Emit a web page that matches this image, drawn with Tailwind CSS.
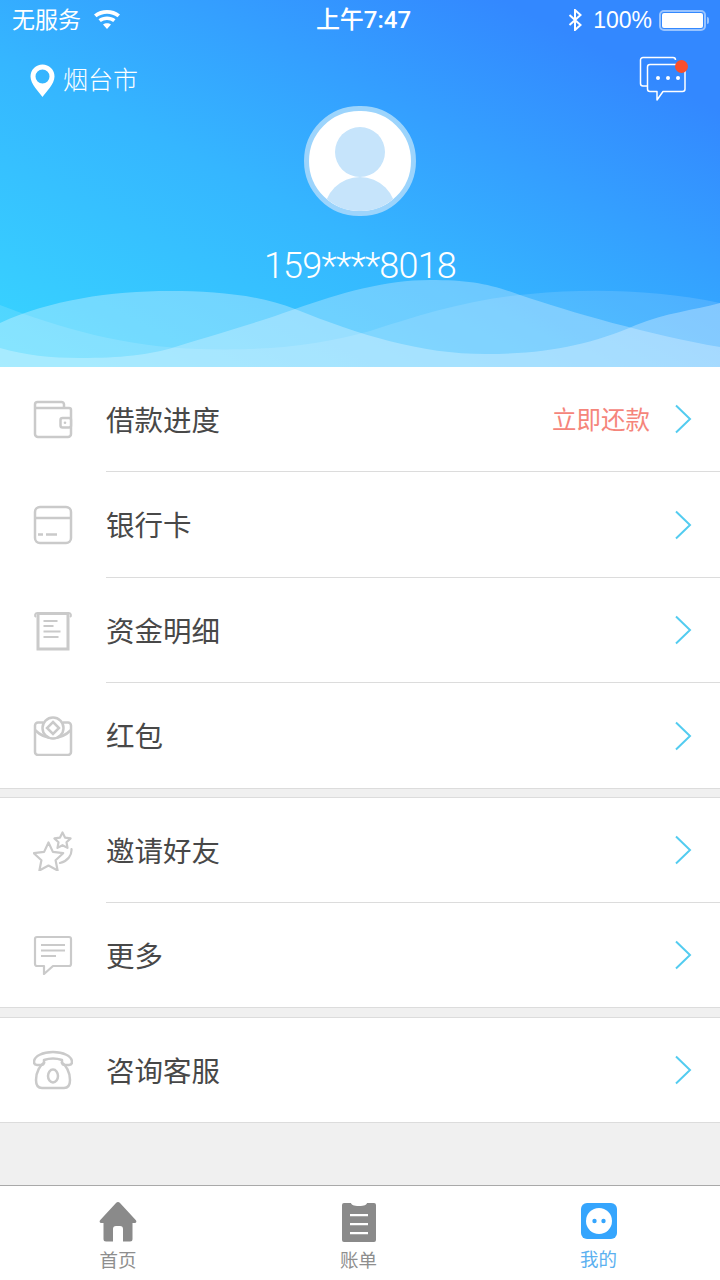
<!DOCTYPE html>
<html lang="zh">
<head>
    <meta charset="UTF-8">
    <meta name="viewport" content="width=device-width, initial-scale=1.0">
    <title>我的</title>
    <script src="https://cdn.jsdelivr.net/npm/@tailwindcss/browser@4"></script>
</head>
<body class="bg-[#f0f0f0] font-['Liberation_Sans','Noto_Sans_CJK_SC',sans-serif]">
<div class="w-[720px] h-[1280px] flex flex-col overflow-hidden">

    <!-- 头部 -->
    <header class="relative h-[367px] shrink-0 bg-[linear-gradient(to_top_right,#38d6ff_0%,#35b6ff_42%,#3388ff_85%)] text-white">
        <svg class="absolute left-0 top-0" width="720" height="367" viewBox="0 0 720 367">
            <path d="M0 323C50 300 110 291 170 291C215 291 260 295 295 309C360 335 420 354 486 354C545 354 590 345 636 325C665 313 695 310 720 303V367H0Z" fill="#fff" fill-opacity=".3"/>
            <path d="M0 305C60 328 125 347 200 349C270 351 320 345 370 331C420 315 470 299 530 294C590 288 660 290 720 303V367H0Z" fill="#fff" fill-opacity=".13"/>
            <path d="M0 348C25 355 50 358 80 358C120 358 150 355 175 347C220 333 250 325 295 309C340 293 385 280 430 280C470 280 490 284 520 295C570 312 650 335 720 347V367H0Z" fill="#fff" fill-opacity=".28"/>
        </svg>

        <div class="relative h-10 flex items-center justify-between pl-3 pr-[11px] text-[23px] leading-none">
            <div class="flex items-center gap-[12px] w-[200px]">
                <span>无服务</span>
                <svg width="28" height="20" viewBox="0 0 28 20" fill="#fff"><path d="M14 19l-4-4.600c2.200-1.700 5.800-1.700 8 0zM7.800 12l-2.300-2.700c4.800-3.800 12.200-3.800 17 0L20.200 12c-3.500-2.700-8.900-2.700-12.400 0zM3.500 7.200L1 4.400c7.200-5.800 18.800-5.800 26 0l-2.500 2.800C18.500 2.500 9.500 2.500 3.500 7.200z"/></svg>
            </div>
            <span class="font-['Roboto','Noto_Sans_CJK_SC',sans-serif] font-medium text-[24px] ml-[6px]">上午7:47</span>
            <div class="flex items-center justify-end w-[200px]">
                <svg class="mr-[10px]" width="15" height="22" viewBox="0 0 15 22" fill="none" stroke="#fff" stroke-width="2"><path d="M1.500 6l11 10-5.500 5V1l5.500 5-11 10"/></svg>
                <span class="mr-[7px]">100%</span>
                <div class="w-[47px] h-[21px] rounded-[5px] border-2 border-white/50 p-[1px]"><div class="w-full h-full bg-white rounded-[2px]"></div></div>
                <div class="w-[2px] h-[7px] bg-white/50 ml-[1px] rounded-r-sm"></div>
            </div>
        </div>

        <div class="relative flex items-start justify-between pl-[30px] pr-[33px] pt-[17px]">
            <div class="flex items-center gap-[8px] h-[46px]">
                <svg width="25" height="33" viewBox="0 0 25 33"><path fill-rule="evenodd" d="M12.500 33C9 28 .5 20 .5 12.500a12 12 0 0 1 24 0C24.500 20 16 28 12.500 33zM12.500 19.500a7 7 0 1 0 0-14 7 7 0 0 0 0 14z" fill="#fff"/></svg>
                <span class="text-[25px] leading-none font-light">烟台市</span>
            </div>
            <svg class="-mt-[1px]" width="48" height="46" viewBox="0 0 48 46" fill="none" stroke="#fff" stroke-width="1.500" stroke-linejoin="round">
                <path d="M8 30H4a2.500 2.500 0 0 1-2.500-2.500V4A2.500 2.500 0 0 1 4 1.500h30a2.500 2.500 0 0 1 2.500 2.500"/>
                <path d="M11 8.500h33a2.500 2.500 0 0 1 2 2.500v22a2.500 2.500 0 0 1-2.500 2.500H24l-6 8.500v-8.500h-7A2.500 2.500 0 0 1 8.500 33V11A2.500 2.500 0 0 1 11 8.500z"/>
                <circle cx="19" cy="22" r="2" fill="#fff" stroke="none"/><circle cx="29" cy="22" r="2" fill="#fff" stroke="none"/><circle cx="39" cy="22" r="2" fill="#fff" stroke="none"/>
            </svg>
            <div class="absolute right-[32px] top-[20px] w-[13px] h-[13px] rounded-full bg-[#fa4f2c]"></div>
        </div>

        <div class="absolute left-[304px] top-[106px] w-[112px] h-[110px] rounded-full bg-white border-[5px] border-[#9cd4fc] overflow-hidden">
            <div class="absolute left-[26px] top-[16px] w-[50px] h-[50px] rounded-full bg-[#c6e4fb]"></div>
            <div class="absolute left-[15px] top-[66px] w-[72px] h-[72px] rounded-full bg-[#c6e4fb]"></div>
        </div>

        <div class="absolute left-0 right-0 top-[246px] text-center font-['Roboto',sans-serif] text-[36px] leading-10 font-light tracking-[-0.8px]">159****8018</div>
    </header>

    <!-- 菜单 -->
    <section class="bg-white border-b border-[#dcdcdc]">
        <a class="h-[105px] flex items-center">
            <div class="w-[106px] pl-[33px] shrink-0">
                <svg width="40" height="40" viewBox="0 0 40 40" fill="none" stroke="#cacaca" stroke-width="2.500"><path d="M2 8V34a3 3 0 0 0 3 3h30a3 3 0 0 0 3-3V10a2 2 0 0 0-2-2H2zM2 8V4.500a2.500 2.500 0 0 1 2.500-2.500h24a2.500 2.500 0 0 1 2.500 2.500V8"/><rect x="27.500" y="18" width="10.500" height="9.500" rx="2" fill="#fff"/><circle cx="32" cy="22.700" r="1.300" fill="#cacaca" stroke="none"/></svg>
            </div>
            <div class="flex-1 h-full flex items-center border-b border-[#dcdcdc] text-[28.500px] text-[#484848]">
                <span class="flex-1 pt-[4px]">借款进度</span>
                <span class="text-[24.500px] text-[#f5857b] mr-[24px] pt-[4px]">立即还款</span>
                <svg class="mr-[27px]" width="19" height="30" viewBox="0 0 19 30" fill="none" stroke="#53ccf0" stroke-width="2"><path d="M2 1.500L16 15 2 28.500"/></svg>
            </div>
        </a>
        <a class="h-[106px] flex items-center">
            <div class="w-[106px] pl-[33px] shrink-0">
                <svg width="40" height="40" viewBox="0 0 40 40" fill="none" stroke="#cacaca" stroke-width="2.500"><rect x="2" y="2" width="36" height="36" rx="5"/><path d="M2 13h36"/><path d="M5 29.500h5M13 29.500h11"/></svg>
            </div>
            <div class="flex-1 h-full flex items-center border-b border-[#dcdcdc] text-[28.500px] text-[#484848]">
                <span class="flex-1 pt-[4px]">银行卡</span>
                <svg class="mr-[27px]" width="19" height="30" viewBox="0 0 19 30" fill="none" stroke="#53ccf0" stroke-width="2"><path d="M2 1.500L16 15 2 28.500"/></svg>
            </div>
        </a>
        <a class="h-[105px] flex items-center">
            <div class="w-[106px] pl-[33px] shrink-0">
                <svg width="40" height="40" viewBox="0 0 40 40" fill="none" stroke="#cacaca" stroke-width="2.500"><path d="M4 2.500h32" stroke-width="3"/><path d="M3 6a2.200 2.200 0 0 1 1-4M37 6a2.200 2.200 0 0 0-1-4" stroke-width="2"/><path d="M5 3v35h30V3" stroke-width="3"/><path d="M10.500 10h14M10.500 15h10M10.500 20.500h17M10.500 26h15" stroke-width="2"/></svg>
            </div>
            <div class="flex-1 h-full flex items-center border-b border-[#dcdcdc] text-[28.500px] text-[#484848]">
                <span class="flex-1 pt-[4px]">资金明细</span>
                <svg class="mr-[27px]" width="19" height="30" viewBox="0 0 19 30" fill="none" stroke="#53ccf0" stroke-width="2"><path d="M2 1.500L16 15 2 28.500"/></svg>
            </div>
        </a>
        <a class="h-[105px] flex items-center">
            <div class="w-[106px] pl-[33px] shrink-0">
                <svg width="40" height="40" viewBox="0 0 40 40" fill="none" stroke="#cacaca" stroke-width="2.500"><path d="M10 6.500H5a3 3 0 0 0-3 3V36a3 3 0 0 0 3 3h30a3 3 0 0 0 3-3V9.500a3 3 0 0 0-3-3h-5"/><path d="M2 14c5 5 10 8 18 8s13-3 18-8"/><circle cx="20" cy="12" r="10.500" fill="#fff"/><path d="M20 6l6 6-6 6-6-6z"/></svg>
            </div>
            <div class="flex-1 h-full flex items-center text-[28.500px] text-[#484848]">
                <span class="flex-1 pt-[4px]">红包</span>
                <svg class="mr-[27px]" width="19" height="30" viewBox="0 0 19 30" fill="none" stroke="#53ccf0" stroke-width="2"><path d="M2 1.500L16 15 2 28.500"/></svg>
            </div>
        </a>
    </section>

    <section class="mt-[8px] bg-white border-t border-b border-[#dcdcdc]">
        <a class="h-[105px] flex items-center">
            <div class="w-[106px] pl-[33px] shrink-0">
                <svg width="40" height="40" viewBox="0 0 40 40" fill="none" stroke="#cacaca" stroke-width="2.200" stroke-linejoin="round"><path d="M15.500 11.500L19.900 20.900 30.200 22.200 22.600 29.300 24.600 39.500 15.500 34.500 6.400 39.500 8.400 29.300 .8 22.200 11.100 20.900z"/><path d="M29.500 1.500L32 6.600 37.600 7.400 33.500 11.300 34.500 16.900 29.500 14.200 24.500 16.900 25.500 11.300 21.400 7.400 27 6.600z"/><path d="M38.500 18c.5 6-3.500 12-11.500 14" stroke-linecap="round"/></svg>
            </div>
            <div class="flex-1 h-full flex items-center border-b border-[#dcdcdc] text-[28.500px] text-[#484848]">
                <span class="flex-1 pt-[4px]">邀请好友</span>
                <svg class="mr-[27px]" width="19" height="30" viewBox="0 0 19 30" fill="none" stroke="#53ccf0" stroke-width="2"><path d="M2 1.500L16 15 2 28.500"/></svg>
            </div>
        </a>
        <a class="h-[104px] flex items-center">
            <div class="w-[106px] pl-[33px] shrink-0">
                <svg width="40" height="40" viewBox="0 0 40 40" fill="none" stroke="#cacaca" stroke-width="2.200" stroke-linejoin="round"><path d="M4 2h32a2 2 0 0 1 2 2v25a2 2 0 0 1-2 2H20l-9 8v-8H4a2 2 0 0 1-2-2V4a2 2 0 0 1 2-2z"/><path d="M8 10h24M8 15.500h24M8 21h15"/></svg>
            </div>
            <div class="flex-1 h-full flex items-center text-[28.500px] text-[#484848]">
                <span class="flex-1 pt-[4px]">更多</span>
                <svg class="mr-[27px]" width="19" height="30" viewBox="0 0 19 30" fill="none" stroke="#53ccf0" stroke-width="2"><path d="M2 1.500L16 15 2 28.500"/></svg>
            </div>
        </a>
    </section>

    <section class="mt-[9px] bg-white border-t border-b border-[#dcdcdc]">
        <a class="h-[104px] flex items-center">
            <div class="w-[106px] pl-[33px] shrink-0">
                <svg width="40" height="40" viewBox="0 0 40 40" fill="none" stroke="#cacaca" stroke-width="2.500" stroke-linejoin="round"><path d="M8 15H4c-2 0-3-1-3-3 0-6 9-10 19-10s19 4 19 10c0 2-1 3-3 3h-4c-2 0-3-1-3-3v-2c-3-1-6-1.500-9-1.500s-6 .5-9 1.500v2c0 2-1 3-3 3z"/><path d="M12 12c-5 3-9 10-9 18 0 5 2 8 6 8h22c4 0 6-3 6-8 0-8-4-15-9-18"/><ellipse cx="20" cy="26" rx="5" ry="6.500"/></svg>
            </div>
            <div class="flex-1 h-full flex items-center text-[28.500px] text-[#484848]">
                <span class="flex-1 pt-[4px]">咨询客服</span>
                <svg class="mr-[27px]" width="19" height="30" viewBox="0 0 19 30" fill="none" stroke="#53ccf0" stroke-width="2"><path d="M2 1.500L16 15 2 28.500"/></svg>
            </div>
        </a>
    </section>

    <div class="flex-1"></div>

    <!-- 底部导航 -->
    <nav class="h-[95px] shrink-0 bg-white border-t border-[#a9a9a9] flex text-[18.500px] leading-6 text-[#8e8e8e]">
        <div class="w-[240px] pr-[4px] pt-[16px] flex flex-col items-center gap-[7px]">
            <svg width="38" height="40" viewBox="0 0 38 40" fill="#8a8a8a"><path d="M19 0c.8 0 1.400.4 2 1l15.700 17c1.200 1.300.8 3-1 3H33.500v16a2.500 2.500 0 0 1-2.500 2.500H24V27a3 3 0 0 0-3-3h-4a3 3 0 0 0-3 3v12.500H7A2.500 2.500 0 0 1 4.500 37V21H2.300c-1.800 0-2.200-1.700-1-3L17 1c.6-.6 1.200-1 2-1z"/></svg>
            <span>首页</span>
        </div>
        <div class="w-[240px] pr-[3px] pt-[16px] flex flex-col items-center gap-[7px]">
            <svg width="34" height="40" viewBox="0 0 34 40" fill="#8a8a8a"><path fill-rule="evenodd" d="M2 1h7c.5 2 2.500 3 8 3s7.500-1 8-3h7a2 2 0 0 1 2 2v35a2 2 0 0 1-2 2H2a2 2 0 0 1-2-2V3a2 2 0 0 1 2-2zM8 12v2.200h18V12zM8 21v2.200h18V21zM8 30v2.200h18V30z"/></svg>
            <span>账单</span>
        </div>
        <div class="w-[240px] pr-[3px] pt-[17px] flex flex-col items-center gap-[9px] text-[#5bb0f0]">
            <svg width="36" height="36" viewBox="0 0 36 36"><rect width="36" height="36" rx="6" fill="#35a5fd"/><circle cx="18" cy="18" r="13" fill="#fff"/><circle cx="13.500" cy="18" r="2.200" fill="#35a5fd"/><circle cx="22.500" cy="18" r="2.200" fill="#35a5fd"/></svg>
            <span>我的</span>
        </div>
    </nav>
</div>
</body>
</html>
